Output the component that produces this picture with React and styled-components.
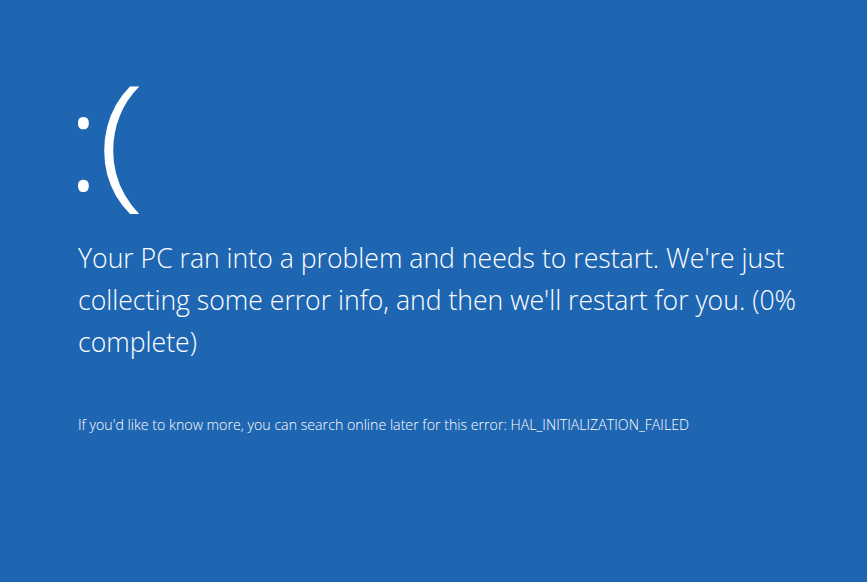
import React from 'react';
import styled, { createGlobalStyle } from 'styled-components';

const Global = createGlobalStyle`
    html, body {
        margin: 0;
        padding: 0;
        background: #1f66b2;
    }
`

export default function App() {
    return (
        <Screen>
            <Global />
            <Content>
                <Face>
                    <Eyes>:</Eyes>
                    <Mouth>(</Mouth>
                </Face>
                <Message>
                    Your PC ran into a problem and needs to restart. We're just collecting some error info, and then we'll restart for you. (0% complete)
                </Message>
                <Details>
                    If you'd like to know more, you can search online later for this error: HAL_INITIALIZATION_FAILED
                </Details>
            </Content>
        </Screen>
    )
}

const Screen = styled.div`
    width: 867px;
    height: 582px;
    background: #1f66b2;
    color: white;
    font-family: "Open Sans", "Noto Sans", sans-serif;
    font-weight: 300;
    overflow: hidden;
`

const Content = styled.div`
    display: flex;
    flex-direction: column;
    align-items: flex-start;
    padding: 62px 0 0 78px;
    width: 740px;
`

const Face = styled.div`
    display: flex;
    align-items: baseline;
    line-height: 1;
`

const Eyes = styled.span`
    font-size: 137px;
    margin-left: -11px;
    letter-spacing: -2px;
`

const Mouth = styled.span`
    display: inline-block;
    font-size: 145px;
    transform: scaleX(1.22);
    transform-origin: left center;
    margin-left: -1px;
`

const Message = styled.p`
    margin: 30px 0 0;
    font-size: 26.6px;
    line-height: 42px;
`

const Details = styled.p`
    margin: 53px 0 0;
    font-size: 14.2px;
    line-height: 18px;
`
